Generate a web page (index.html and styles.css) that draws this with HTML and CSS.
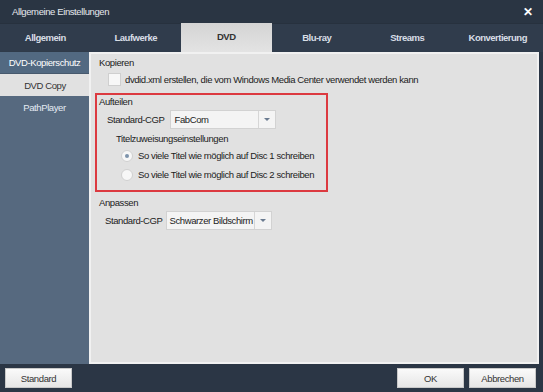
FILE: index.html
```html
<!DOCTYPE html>
<html lang="de">
<head>
<meta charset="utf-8">
<title>Allgemeine Einstellungen</title>
<link rel="stylesheet" href="styles.css">
</head>
<body>
<div class="window">
  <div class="titlebar">
    <span class="title">Allgemeine Einstellungen</span>
    <span class="close">✕</span>
  </div>
  <div class="tabs">
    <div class="tab">Allgemein</div>
    <div class="tab">Laufwerke</div>
    <div class="tab active">DVD</div>
    <div class="tab">Blu-ray</div>
    <div class="tab">Streams</div>
    <div class="tab">Konvertierung</div>
  </div>
  <div class="main">
    <div class="sidebar">
      <div class="side-item first">DVD-Kopierschutz</div>
      <div class="side-item selected">DVD Copy</div>
      <div class="side-item">PathPlayer</div>
    </div>
    <div class="panel">
      <div class="group-title">Kopieren</div>
      <label class="check-row">
        <span class="checkbox"></span>
        <span>dvdid.xml erstellen, die vom Windows Media Center verwendet werden kann</span>
      </label>
      <div class="redbox">
        <div class="group-title">Aufteilen</div>
        <div class="field-row">
          <span class="field-label">Standard-CGP</span>
          <div class="select sel-fab"><span class="sel-text">FabCom</span><span class="sel-arrow"></span></div>
        </div>
        <div class="sub-title">Titelzuweisungseinstellungen</div>
        <div class="radio-row"><span class="radio checked"></span><span>So viele Titel wie möglich auf Disc 1 schreiben</span></div>
        <div class="radio-row"><span class="radio"></span><span>So viele Titel wie möglich auf Disc 2 schreiben</span></div>
      </div>
      <div class="group-title anpassen">Anpassen</div>
      <div class="field-row field-row2">
        <span class="field-label">Standard-CGP</span>
        <div class="select sel-black"><span class="sel-text">Schwarzer Bildschirm</span><span class="sel-arrow"></span></div>
      </div>
    </div>
  </div>
  <div class="bottombar">
    <button class="btn">Standard</button>
    <div class="spacer"></div>
    <button class="btn">OK</button>
    <button class="btn">Abbrechen</button>
  </div>
</div>
</body>
</html>
```
FILE: styles.css
```css
* { box-sizing: border-box; }
html, body { margin: 0; padding: 0; }
body {
  width: 543px;
  height: 392px;
  background: #2b3645;
  font-family: "Liberation Sans", Arial, sans-serif;
  font-size: 9.5px;
  letter-spacing: -0.4px;
  color: #222;
  overflow: hidden;
}
.window { display: flex; flex-direction: column; height: 392px; }
.titlebar {
  height: 23px;
  background: #2a3543;
  display: flex;
  align-items: center;
  padding: 0 10px 0 12px;
  color: #e6e9ee;
}
.title { flex: 1; }
.close {
  font-weight: bold;
  font-size: 12px;
  letter-spacing: 0;
  color: #fff;
}
.tabs {
  height: 29px;
  display: grid;
  grid-template-columns: repeat(6, 1fr);
  background: #303c4c;
  border-top: 1px solid #27313e;
}
.tab {
  display: flex;
  align-items: center;
  justify-content: center;
  color: #d8dee6;
  font-weight: bold;
  letter-spacing: -0.5px;
  padding-bottom: 2px;
}
.tab.active {
  background: linear-gradient(#d4d4d4, #e3e3e3);
  color: #333;
  margin-top: -1px;
}
.main { display: flex; height: 312px; }
.sidebar {
  width: 89px;
  background: #56697f;
  display: flex;
  flex-direction: column;
}
.side-item {
  height: 22px;
  display: flex;
  align-items: center;
  justify-content: center;
  color: #e4ebf3;
}
.side-item.first {
  background: #526981;
  color: #fff;
  border-bottom: 1px solid #47596d;
  box-shadow: 0 1px 2px rgba(0,0,0,0.25);
}
.side-item.selected {
  background: #e1e1e1;
  color: #333;
  margin-right: -1px;
}
.panel {
  width: 450px;
  background: #e1e1e1;
  border: 2px solid #f1f1f1;
  padding: 2px 0 0 8px;
  color: #222;
}
.group-title { height: 14px; line-height: 14px; }
.check-row {
  display: flex;
  align-items: center;
  gap: 4px;
  margin: 1px 0 0 9px;
  height: 16px;
}
.checkbox {
  width: 13px;
  height: 13px;
  background: #f7f7f7;
  border: 1px solid #cfcfcf;
}
.redbox {
  width: 233px;
  height: 99px;
  border: 2px solid #dc3a40;
  margin: 6px 0 0 -4px;
  padding: 0 0 0 2px;
}
.field-row {
  display: flex;
  align-items: center;
  gap: 5px;
  margin: 1px 0 0 8px;
  height: 19px;
}
.select {
  height: 19px;
  background: #f4f4f4;
  border: 1px solid #d2d2d2;
  display: flex;
  align-items: center;
}
.sel-fab { width: 106px; }
.sel-black { width: 106px; }
.sel-text { flex: 1; padding-left: 4px; white-space: nowrap; }
.sel-black .sel-text { padding-left: 3px; }
.sel-arrow {
  width: 17px;
  height: 17px;
  border-left: 1px solid #d6d6d6;
  position: relative;
}
.sel-arrow::after {
  content: "";
  position: absolute;
  left: 5px;
  top: 7px;
  border-left: 3px solid transparent;
  border-right: 3px solid transparent;
  border-top: 3px solid #6a7b90;
}
.sub-title { margin: 3px 0 0 17px; height: 14px; line-height: 14px; }
.radio-row {
  display: flex;
  align-items: center;
  gap: 5px;
  margin: 2px 0 0 22px;
  height: 15px;
}
.radio-row + .radio-row { margin-top: 4px; }
.radio {
  width: 12px;
  height: 12px;
  border-radius: 50%;
  background: #f7f7f7;
  border: 1px solid #d0d0d0;
  position: relative;
}
.radio.checked::after {
  content: "";
  position: absolute;
  left: 3px;
  top: 3px;
  width: 4px;
  height: 4px;
  border-radius: 50%;
  background: #7d93ab;
}
.anpassen { margin-top: 4px; }
.field-row2 { margin-left: 6px; margin-top: 1px; gap: 3px; }
.bottombar {
  flex: 1;
  display: flex;
  align-items: center;
  padding: 0 7px 0 5px;
  gap: 5px;
  background: #2b3645;
}
.spacer { flex: 1; }
.btn {
  width: 67px;
  height: 20px;
  background: linear-gradient(#fafafa, #e6e6e6);
  border: 1px solid #c9c9c9;
  font-family: "Liberation Sans", Arial, sans-serif;
  font-size: 9.5px;
  letter-spacing: -0.4px;
  color: #333;
  padding: 0;
}
```
